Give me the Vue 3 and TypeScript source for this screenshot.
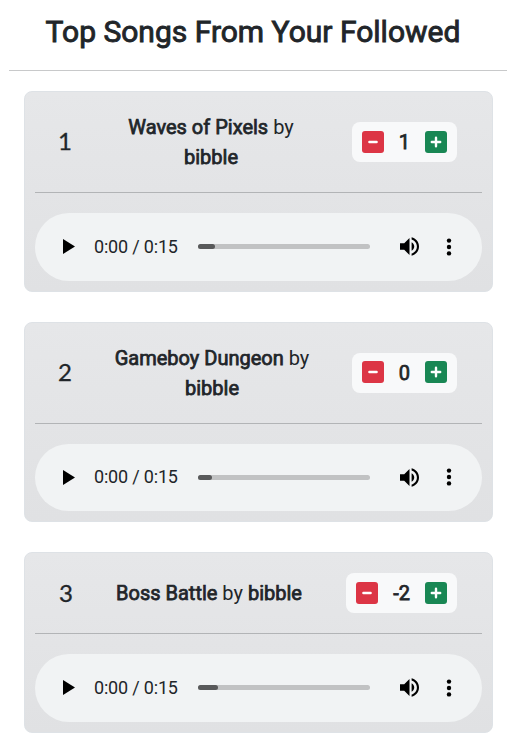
<script setup lang="ts">
interface Song {
  rank: number
  title: string
  author: string
  votes: number
  progress: number
}

const songs: Song[] = [
  { rank: 1, title: 'Waves of Pixels', author: 'bibble', votes: 1, progress: 17 },
  { rank: 2, title: 'Gameboy Dungeon', author: 'bibble', votes: 0, progress: 14 },
  { rank: 3, title: 'Boss Battle', author: 'bibble', votes: -2, progress: 20 },
]
</script>

<template>
  <main class="page">
    <h1 class="heading">Top Songs From Your Followed</h1>
    <section class="songs">
      <article v-for="song in songs" :key="song.rank" class="card" :class="'card-' + song.rank">
        <header class="info">
          <div class="rank">{{ song.rank }}</div>
          <div class="title"><b>{{ song.title }}</b> by <b>{{ song.author }}</b></div>
          <div class="votes-cell">
            <div class="votes">
              <button class="vote down" aria-label="Vote down">
                <svg viewBox="0 0 22 22"><path d="M7.4 11h7.2" /></svg>
              </button>
              <span class="count">{{ song.votes }}</span>
              <button class="vote up" aria-label="Vote up">
                <svg viewBox="0 0 22 22"><path d="M6.8 11h8.4M11 6.8v8.4" /></svg>
              </button>
            </div>
          </div>
        </header>
        <div class="player">
          <svg class="play" viewBox="0 0 12 15"><path d="M0 0v15l12-7.5z" /></svg>
          <span class="time">0:00 / 0:15</span>
          <div class="track"><div class="played" :style="{ width: song.progress + 'px' }"></div></div>
          <svg class="volume" viewBox="3 3 18 18">
            <path d="M3 9v6h4l5 5V4L7 9H3zm13.5 3c0-1.77-1.02-3.29-2.5-4.03v8.05c1.48-.73 2.5-2.25 2.5-4.02zM14 3.23v2.06c2.89.86 5 3.54 5 6.71s-2.11 5.85-5 6.71v2.06c4.01-.91 7-4.49 7-8.77s-2.99-7.86-7-8.77z" />
          </svg>
          <svg class="more" viewBox="0 0 6 18">
            <circle cx="3" cy="2.6" r="2.2" /><circle cx="3" cy="9" r="2.2" /><circle cx="3" cy="15.4" r="2.2" />
          </svg>
        </div>
      </article>
    </section>
  </main>
</template>

<style>
body {
  background: #fff;
  overflow: hidden;
}
</style>

<style scoped>
* {
  box-sizing: border-box;
}
.page {
  height: 746px;
  padding-left: 9px;
  overflow: hidden;
  color: #212529;
  font-family: Roboto, sans-serif;
}
.heading {
  height: 71px;
  margin: 0;
  padding: 14px 10px 0 0;
  border-bottom: 1px solid #c8c9ca;
  font-size: 30px;
  line-height: 36px;
  font-weight: 400;
  -webkit-text-stroke: 0.9px #212529;
  text-align: center;
  white-space: nowrap;
}
.songs {
  display: flex;
  flex-direction: column;
  gap: 30px;
  padding: 20px 14px 0 15px;
}
.card {
  padding: 20px 10px 10px;
  border: 1px solid #dee2e6;
  border-radius: 8px;
  background: linear-gradient(#e6e7e9, #e0e1e3);
}
.info {
  display: grid;
  grid-template-columns: 60px 232px 155px;
  align-items: center;
  padding-bottom: 20px;
  border-bottom: 1px solid #b2b4b6;
}
.card-2 .info {
  grid-template-columns: 61px 232px 154px;
}
.card-3 .info {
  grid-template-columns: 58px 232px 157px;
}
.rank {
  padding-left: 23px;
  font-family: Lato, sans-serif;
  font-size: 24px;
  line-height: 28px;
  margin-top: -2px;
  -webkit-text-stroke: 0.3px #212529;
}
.card-2 .rank {
  margin-top: -1px;
}
.card-3 .rank {
  padding-left: 24px;
  margin-top: 0;
}
.title {
  padding: 0 15px;
  font-size: 20px;
  line-height: 30px;
  text-align: center;
}
.title b {
  font-weight: 400;
  -webkit-text-stroke: 0.75px #212529;
}
.votes-cell {
  display: flex;
  justify-content: flex-end;
  padding-right: 25px;
}
.votes {
  display: flex;
  align-items: center;
  height: 40px;
  padding: 0 10px;
  border-radius: 8px;
  background: #f8f9fa;
}
.vote {
  width: 22px;
  height: 22px;
  margin-bottom: 1px;
  padding: 0;
  border: 0;
  border-radius: 3px;
}
.vote svg {
  display: block;
  fill: none;
  stroke: #fff;
  stroke-width: 2.4;
  stroke-linecap: round;
}
.down {
  background: #dc3545;
}
.up {
  background: #198754;
}
.count {
  padding: 0 15px;
  font-size: 20px;
  line-height: 30px;
  font-weight: 400;
  -webkit-text-stroke: 0.75px #212529;
}
.player {
  display: flex;
  align-items: center;
  height: 67.5px;
  margin-top: 20px;
  padding: 0 30px 0 28px;
  border-radius: 34px;
  background: #f1f3f4;
}
.play {
  width: 12px;
  height: 15px;
}
.time {
  width: 85px;
  margin: 0 19px;
  font-size: 18px;
  letter-spacing: -0.18px;
  line-height: 24px;
  white-space: nowrap;
}
.track {
  width: 172px;
  height: 5px;
  border-radius: 3px;
  background: #c1c2c3;
}
.played {
  height: 5px;
  border-radius: 3px;
  background: #58595a;
}
.volume {
  width: 19px;
  height: 19px;
  margin-left: 30px;
}
.more {
  width: 6px;
  height: 18px;
  margin-left: auto;
}
</style>
